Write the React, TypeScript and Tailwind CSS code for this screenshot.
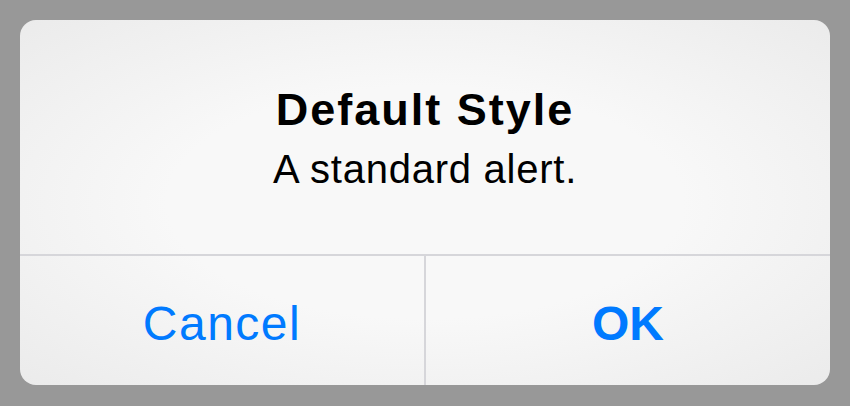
export default function App() {
    return (
        <div className="h-[406px] w-[850px] bg-[#989898] p-5 font-['Liberation_Sans',Arial,sans-serif]">
            <div className="flex h-[365px] w-[810px] flex-col overflow-hidden rounded-[16px] bg-[radial-gradient(ellipse_at_center,#f8f8f8_45%,#ebebeb_100%)]">
                <div className="flex h-[234px] flex-col items-center justify-center pt-[2px] text-black">
                    <h1 className="text-[45px] leading-[48px] font-bold tracking-[2px]">
                        Default Style
                    </h1>
                    <p className="mt-[13px] text-[40px] leading-[44px] tracking-[0.75px]">
                        A standard alert.
                    </p>
                </div>

                <div className="h-[2px] bg-[#d6d6da]" />

                <div className="flex flex-1 text-[#007aff]">
                    <button className="flex flex-1 items-center justify-center pt-[6px] text-[48px] tracking-[1.5px]">
                        Cancel
                    </button>
                    <div className="w-[2px] bg-[#d6d6da]" />
                    <button className="flex flex-1 items-center justify-center pt-[6px] text-[48px] font-bold">
                        OK
                    </button>
                </div>
            </div>
        </div>
    );
}
